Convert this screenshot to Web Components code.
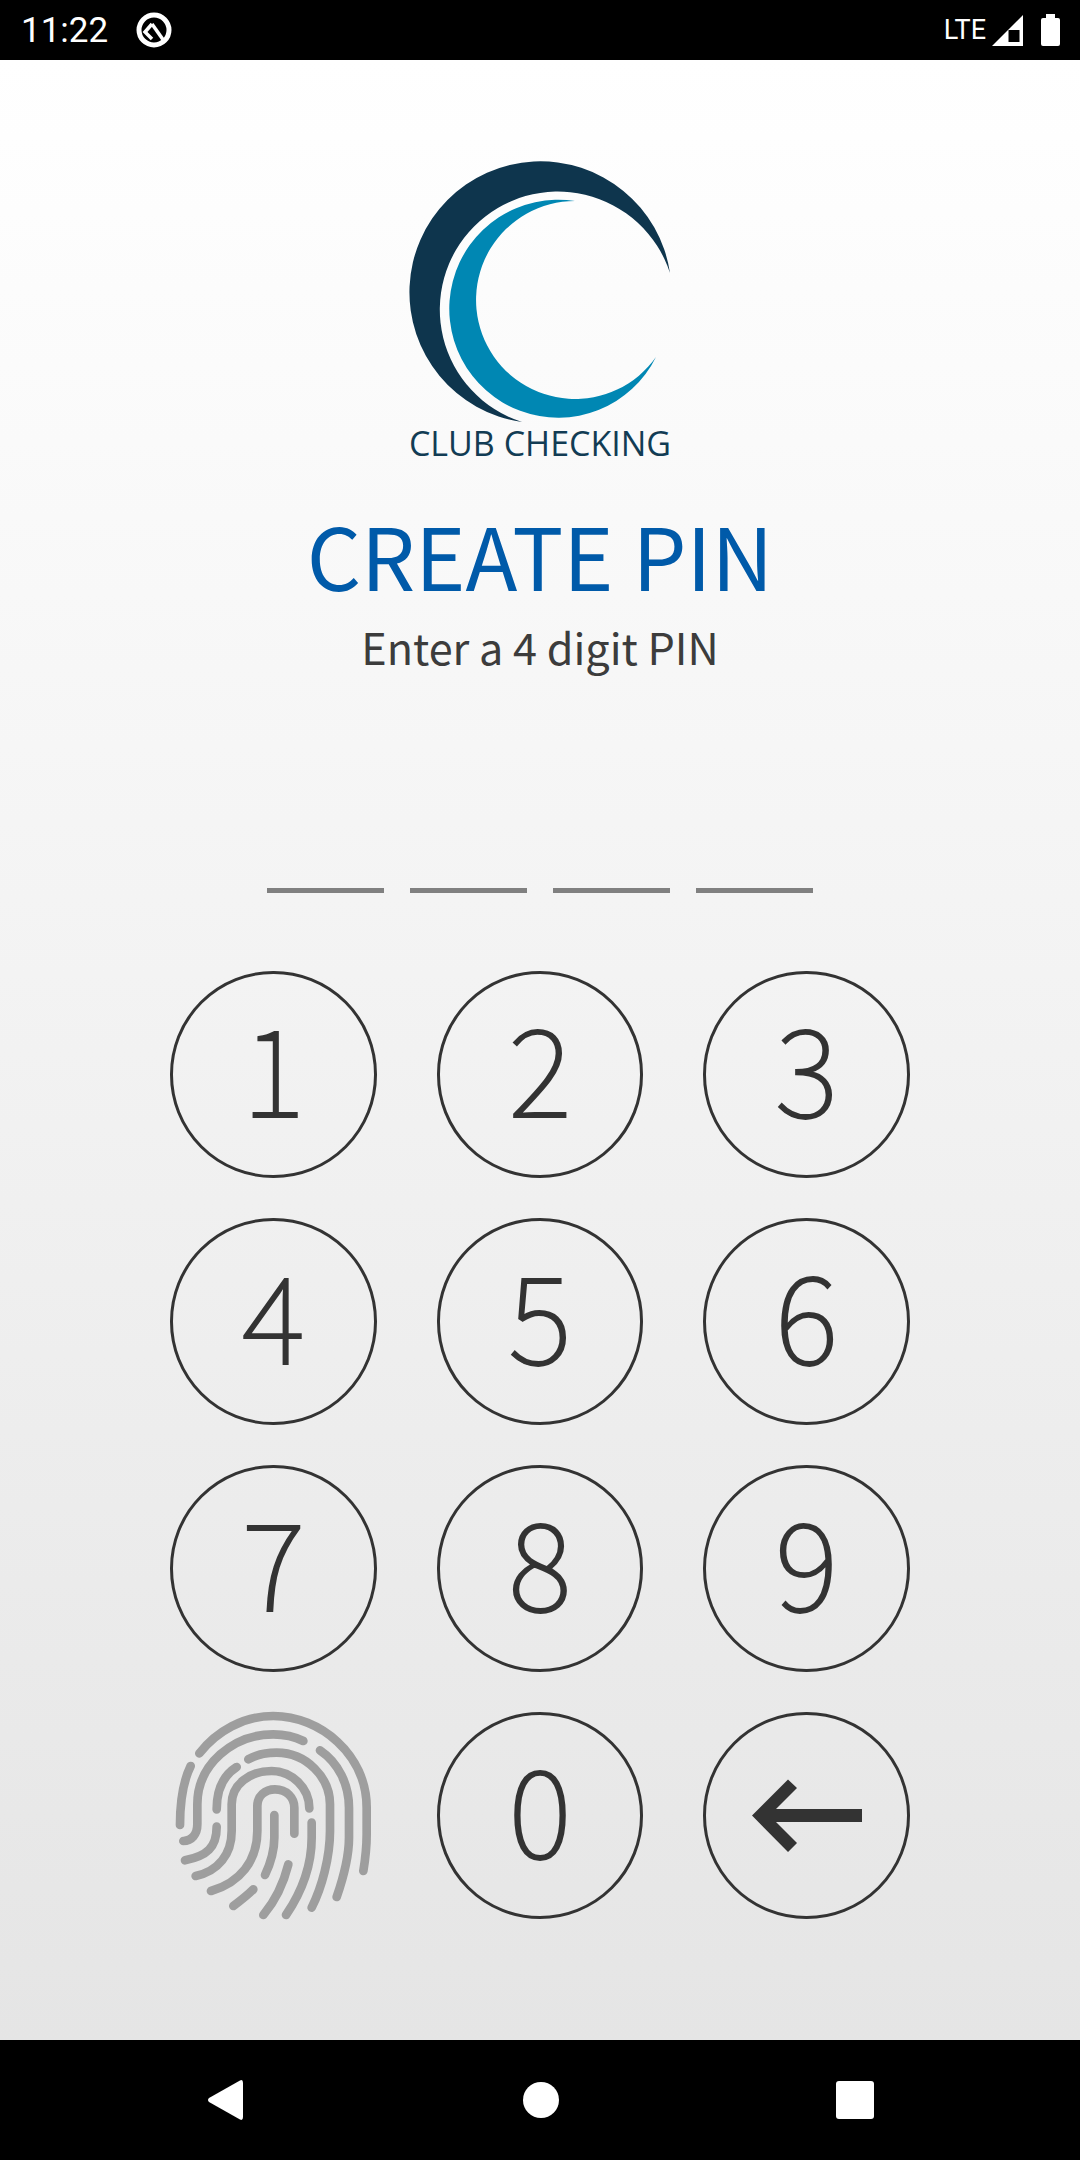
<!DOCTYPE html>
<html>
<head>
<meta charset="utf-8">
<title>Create PIN</title>
<style>
  html, body { margin: 0; padding: 0; }
  body { width: 1080px; height: 2160px; overflow: hidden; font-family: "Noto Sans CJK JP", "Noto Sans", sans-serif; }
  pin-screen { height: 2160px; }
</style>
</head>
<body>
<pin-screen>
  <status-bar time="11:22" slot="top"></status-bar>
  <app-logo></app-logo>
  <pin-heading title-text="CREATE PIN">Enter a 4 digit PIN</pin-heading>
  <pin-slots count="4"></pin-slots>
  <key-pad>
    <pin-key>1</pin-key><pin-key>2</pin-key><pin-key>3</pin-key>
    <pin-key>4</pin-key><pin-key>5</pin-key><pin-key>6</pin-key>
    <pin-key>7</pin-key><pin-key>8</pin-key><pin-key>9</pin-key>
    <finger-print></finger-print><pin-key>0</pin-key>
    <pin-key icon>
      <svg width="206" height="206" viewBox="0 0 206 206"><path fill="#333" d="M48 103.500 84 67.500 93 76 72 97H158V110H72L93 131 84 140Z"/></svg>
    </pin-key>
  </key-pad>
  <nav-bar slot="bottom"></nav-bar>
</pin-screen>

<script>
class PinScreen extends HTMLElement {
  constructor() {
    super();
    this.attachShadow({ mode: 'open' });
    this.shadowRoot.innerHTML = `
      <style>
        :host { display: flex; flex-direction: column; }
        main {
          flex: 1;
          display: flex;
          flex-direction: column;
          align-items: center;
          padding-top: 101px;
          background: linear-gradient(#ffffff, #e5e5e5);
        }
      </style>
      <slot name="top"></slot>
      <main><slot></slot></main>
      <slot name="bottom"></slot>
    `;
  }
}

class StatusBar extends HTMLElement {
  constructor() {
    super();
    this.attachShadow({ mode: 'open' });
    this.shadowRoot.innerHTML = `
      <style>
        :host {
          display: flex;
          align-items: center;
          height: 60px;
          padding: 0 20px 0 21px;
          background: #000;
          color: #fff;
          font-family: Roboto, sans-serif;
        }
        .time { font-size: 35px; }
        .q { margin-left: 28px; }
        .lte { margin-left: auto; font-size: 27px; }
        .sig { margin-left: 6px; }
        .bat { margin-left: 18px; }
        svg { display: block; }
      </style>
      <span class="time">${this.getAttribute('time')}</span>
      <svg class="q" width="36" height="36" viewBox="0 0 36 36" fill="none" stroke="#fff">
        <circle cx="18" cy="18" r="15" stroke-width="5"/>
        <path d="M16 12 9 20 16 27" stroke-width="3.500"/>
        <path d="M16 12 28 29" stroke-width="3.500"/>
      </svg>
      <span class="lte">LTE</span>
      <svg class="sig" width="31" height="31" viewBox="0 0 31 31">
        <path fill="#fff" fill-rule="evenodd" d="M31 0V31H0ZM27.500 15H16.500V27H27.500Z"/>
      </svg>
      <svg class="bat" width="19" height="32" viewBox="0 0 19 32">
        <path fill="#fff" d="M5 0H14V4H17Q19 4 19 6V30Q19 32 17 32H2Q0 32 0 30V6Q0 4 2 4H5Z"/>
      </svg>
    `;
  }
}

class AppLogo extends HTMLElement {
  constructor() {
    super();
    this.attachShadow({ mode: 'open' });
    this.shadowRoot.innerHTML = `
      <style>
        :host { display: flex; flex-direction: column; align-items: center; width: 262px; }
        svg { display: block; }
        span {
          font-family: "Open Sans", sans-serif;
          font-size: 34px;
          line-height: 40px;
          color: #123c54;
          white-space: nowrap;
          margin-top: -1px;
        }
      </style>
      <svg width="262" height="263" viewBox="409 161 262 263">
        <path fill="#0e354d" d="M670 273A131 131 0 1 0 522 422A118 118 0 1 1 670 273Z"/>
        <path fill="#0087b3" d="M575 201A109 109 0 1 0 656 357A99 99 0 1 1 575 201Z"/>
      </svg>
      <span>CLUB CHECKING</span>
    `;
  }
}

class PinHeading extends HTMLElement {
  constructor() {
    super();
    this.attachShadow({ mode: 'open' });
    this.shadowRoot.innerHTML = `
      <style>
        :host { display: flex; flex-direction: column; align-items: center; margin-top: 41px; }
        h1 {
          margin: 0;
          font: 400 85.300px/100px "Noto Sans CJK JP", sans-serif;
          color: #005aa9;
          white-space: nowrap;
        }
        p {
          margin: 12px 0 0;
          font: 400 43.200px/60px "Noto Sans CJK JP", sans-serif;
          color: #3c3c3c;
          white-space: nowrap;
        }
      </style>
      <h1>${this.getAttribute('title-text')}</h1>
      <p><slot></slot></p>
    `;
  }
}

class PinSlots extends HTMLElement {
  constructor() {
    super();
    this.attachShadow({ mode: 'open' });
    const count = Number(this.getAttribute('count'));
    this.shadowRoot.innerHTML = `
      <style>
        :host { display: flex; gap: 26px; margin-top: 212px; }
        i { display: block; width: 117px; height: 5px; background: #808080; }
      </style>
      ${'<i></i>'.repeat(count)}
    `;
  }
}

class KeyPad extends HTMLElement {
  constructor() {
    super();
    this.attachShadow({ mode: 'open' });
    this.shadowRoot.innerHTML = `
      <style>
        :host {
          display: grid;
          grid-template-columns: repeat(3, 206.500px);
          grid-auto-rows: 206.500px;
          column-gap: 60px;
          row-gap: 40.500px;
          margin-top: 78px;
        }
      </style>
      <slot></slot>
    `;
  }
}

class PinKey extends HTMLElement {
  constructor() {
    super();
    this.attachShadow({ mode: 'open' });
    // the installed faces jump from too thin to too heavy, so thicken the thin one
    this.shadowRoot.innerHTML = `
      <style>
        :host {
          display: flex;
          align-items: center;
          justify-content: center;
          box-sizing: border-box;
          width: 206.500px;
          height: 206.500px;
          padding-bottom: 20px;
          border: 3px solid #333;
          border-radius: 50%;
          color: #333;
          font: 100 121px/1 "Noto Sans CJK JP", sans-serif;
          -webkit-text-stroke: 1.800px #333;
        }
        :host([icon]) { padding-bottom: 0; }
        ::slotted(svg) { margin: -3px; display: block; }
      </style>
      <slot></slot>
    `;
  }
}

class FingerPrint extends HTMLElement {
  constructor() {
    super();
    this.attachShadow({ mode: 'open' });
    this.shadowRoot.innerHTML = `
      <style>
        :host { display: block; width: 250px; height: 250px; margin: -21px 0 0 -20px; }
        svg { display: block; }
      </style>
      <svg width="250" height="250" viewBox="0 0 750 750" fill="none" stroke="#9e9e9e" stroke-width="26" stroke-linecap="round">
        <path d="M148 187C200 120 280 75 370 75C510 75 650 190 650 350V430C650 470 645 510 640 540"/>
        <path d="M122 225C100 270 90 320 90 402"/>
        <path d="M100 450C125 450 142 430 142 400V340C142 220 250 130 370 130C400 130 430 135 460 150"/>
        <path d="M510 178C565 215 597 280 597 350V440C597 500 580 560 560 618"/>
        <path d="M260 228C225 250 200 290 200 355"/>
        <path d="M295 205C320 190 350 185 380 185C470 185 540 260 540 340V420C540 500 515 590 485 650"/>
        <path d="M105 508C170 495 200 470 200 407"/>
        <path d="M137 555C205 540 245 490 245 420V340C245 280 300 240 365 240C425 240 478 290 478 352"/>
        <path d="M183 600C270 575 322 510 322 420V345C322 315 345 295 375 295C410 295 433 320 433 350V428"/>
        <path d="M373 372V440C373 480 360 520 345 552"/>
        <path d="M485 395V440C485 530 450 610 408 672"/>
        <path d="M415 520C400 580 375 630 340 672"/>
        <path d="M310 595C290 615 270 630 250 645"/>
      </svg>
    `;
  }
}

class NavBar extends HTMLElement {
  constructor() {
    super();
    this.attachShadow({ mode: 'open' });
    this.shadowRoot.innerHTML = `
      <style>
        :host {
          display: grid;
          grid-template-columns: 315px 314px 314px;
          justify-content: center;
          justify-items: center;
          align-items: center;
          height: 120px;
          background: #000;
        }
        svg { display: block; }
      </style>
      <svg width="36" height="40" viewBox="0 0 36 40"><path fill="#fff" d="M1 18 32 0.500Q35 -1 35 3V37Q35 41 32 39.500L1 22Q-1 20 1 18Z"/></svg>
      <svg width="36" height="36" viewBox="0 0 36 36"><circle cx="18" cy="18" r="18" fill="#fff"/></svg>
      <svg width="38" height="38" viewBox="0 0 38 38"><rect width="38" height="38" rx="3" fill="#fff"/></svg>
    `;
  }
}

customElements.define('pin-screen', PinScreen);
customElements.define('status-bar', StatusBar);
customElements.define('app-logo', AppLogo);
customElements.define('pin-heading', PinHeading);
customElements.define('pin-slots', PinSlots);
customElements.define('key-pad', KeyPad);
customElements.define('pin-key', PinKey);
customElements.define('finger-print', FingerPrint);
customElements.define('nav-bar', NavBar);
</script>
</body>
</html>
